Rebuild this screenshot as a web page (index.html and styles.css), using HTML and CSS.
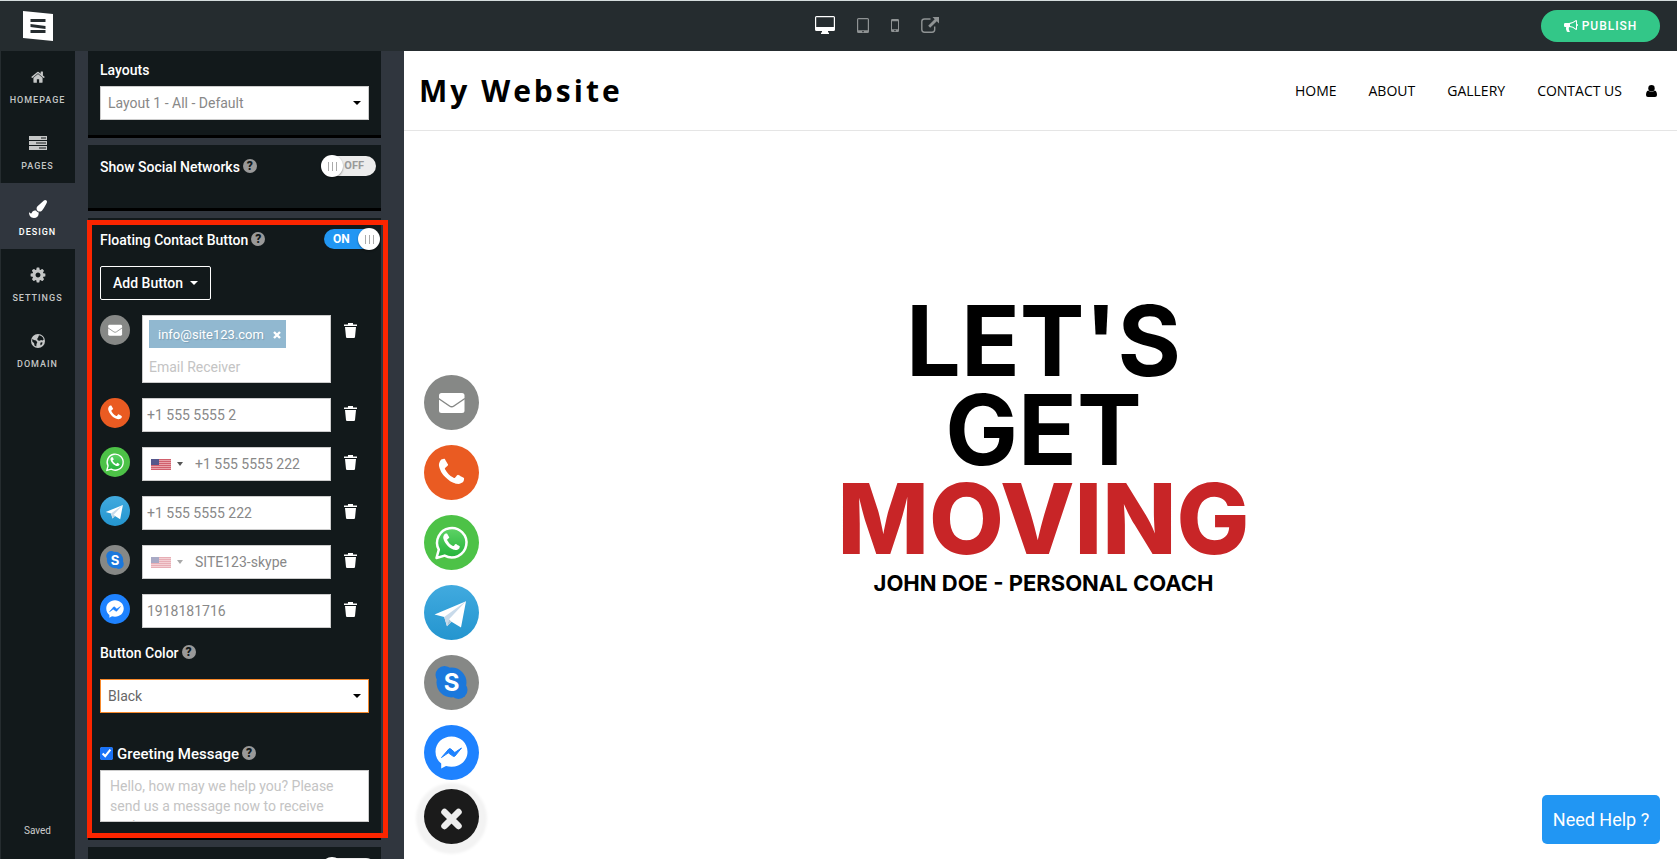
FILE: index.html
```html
<!DOCTYPE html>
<html lang="en">
    <head>
        <meta charset="utf-8">
        <title>Website Editor</title>
        <link rel="stylesheet" href="styles.css">
    </head>
    <body>
        <!-- shared icons -->
        <svg class="sprite" aria-hidden="true">
            <linearGradient id="tgblue" x1="0" y1="0" x2="0" y2="1"><stop offset="0" stop-color="#41aadf"/><stop offset="1" stop-color="#2495cf"/></linearGradient>
            <linearGradient id="wagreen" x1="0" y1="0" x2="0" y2="1"><stop offset="0" stop-color="#5fd366"/><stop offset="1" stop-color="#23b33a"/></linearGradient>
            <symbol id="c-mail" viewBox="0 0 55 55">
                <circle cx="27.500" cy="27.500" r="27.500" fill="#868886"/>
                <rect x="15" y="18" width="25.500" height="20" rx="2.500" fill="#fff"/>
                <path d="M14.500 23.500l11 7.500q2.200 1.500 4.400 0l11-7.500" fill="none" stroke="#868886" stroke-width="1.500"/>
            </symbol>
            <symbol id="c-phone" viewBox="0 0 55 55">
                <circle cx="27.500" cy="27.500" r="27.500" fill="#ea5b22"/>
                <svg x="11.500" y="11.500" width="32" height="32" viewBox="0 0 1792 1792"><use href="#phone" fill="#fff"/></svg>
            </symbol>
            <symbol id="c-whatsapp" viewBox="0 0 55 55">
                <circle cx="27.500" cy="27.500" r="27.500" fill="#4dc247"/>
                <path d="M12.500 43l2.300-8.300a14.700 14.700 0 1 1 5.800 5.900z" fill="url(#wagreen)" stroke="#fff" stroke-width="2.500" stroke-linejoin="round"/>
                <svg x="17" y="17" width="21" height="21" viewBox="0 0 1792 1792"><use href="#phone" fill="#fff"/></svg>
            </symbol>
            <symbol id="c-telegram" viewBox="0 0 55 55">
                <circle cx="27.500" cy="27.500" r="27.500" fill="url(#tgblue)"/>
                <path d="M10.500 29.500L42 16.300l-5 26.200-9.500-5.800-4.500 4.500-2.800-9.200z" fill="#fff"/>
                <path d="M20.200 32L42 16.300 25 34.300l-2 6.900z" fill="#c8daea"/>
                <path d="M23 41.200l2-6.900 2.500 2.400z" fill="#a9c6d8"/>
            </symbol>
            <symbol id="c-skype" viewBox="0 0 55 55">
                <circle cx="27.500" cy="27.500" r="27.500" fill="#868886"/>
                <circle cx="27.500" cy="27.500" r="15" fill="#1b78dc"/>
                <circle cx="20.500" cy="20" r="9" fill="#1b78dc"/>
                <circle cx="34.500" cy="35" r="9" fill="#1b78dc"/>
                <text x="27.500" y="36" text-anchor="middle" font-family="Inter, sans-serif" font-weight="700" font-size="24" fill="#fff">S</text>
            </symbol>
            <symbol id="c-messenger" viewBox="0 0 55 55">
                <circle cx="27.500" cy="27.500" r="27.500" fill="#1e82ff"/>
                <path d="M27.500 11.500c-9 0-16 6.600-16 15.200 0 5 2.200 9 5.700 11.800v5l4.800-2.500c1.700.5 3.600.8 5.500.8 9 0 16-6.500 16-15.100s-7-15.200-16-15.200z" fill="#fff"/>
                <path d="M17.500 32.500l7.300-8.500q1-.8 2 0l4 3.500 6.700-4.500-6.500 8q-1 .9-2.200 0l-4.500-3.200z" fill="#1e82ff" stroke="#1e82ff" stroke-linejoin="round"/>
            </symbol>
            <symbol id="phone" viewBox="0 0 1792 1792">
                <path d="M1600 1240q0 27-10 70.500t-21 68.500q-21 50-122 106-94 51-186 51-27 0-53-3.500t-57.500-12.500-47-14.500-55.500-20.500-49-18q-98-35-175-83-127-79-264-216t-216-264q-48-77-83-175-3-9-18-49t-20.500-55.500-14.500-47-12.500-57.500-3.500-53q0-92 51-186 56-101 106-122 25-11 68.500-21t70.500-10q14 0 21 3 18 6 53 76 11 19 30 54t35 63.500 31 53.500q3 4 17.500 25t21.500 35.500 7 28.500q0 20-28.500 50t-62 55-62 53-28.500 46q0 9 5 22.500t8.500 20.500 14 24 11.500 19q76 137 174 235t235 174q2 1 19 11.500t24 14 20.500 8.500 22.500 5q18 0 46-28.500t53-62 55-62 50-28.500q14 0 28.500 7t35.500 21.500 25 17.500q25 15 53.500 31t63.500 35 54 30q70 35 76 53 3 7 3 21z"/>
            </symbol>
            <symbol id="trash" viewBox="0 0 13 15">
                <path d="M0 1.500h4V0h5v1.500h4V3H0zM1 4h11l-1 10q-.1 1-1 1H3q-.9 0-1-1z"/>
            </symbol>
            <symbol id="flag" viewBox="0 0 20 11">
                <rect width="20" height="11" fill="#e9a3aa"/>
                <path d="M0 .5h20M0 2.500h20M0 4.500h20M0 6.500h20M0 8.500h20M0 10.500h20" stroke="#d0606d"/>
                <rect width="8" height="6" fill="#55588c"/>
            </symbol>
        </svg>

        <header id="TopBar">
            <a id="Logo" href="#" aria-label="Dashboard">
                <svg width="30" height="30" viewBox="0 0 30 30">
                    <path d="M0 0l30 3v27L0 27z" fill="#fff"/>
                    <path d="M7.500 8h15v3h-15zM7.500 13l15 2v3l-15-2zM7.500 19h15v3h-15z" fill="#252c2f"/>
                </svg>
            </a>
            <div id="Devices">
                <button class="device active" aria-label="Desktop">
                    <svg width="20" height="18" viewBox="0 0 20 18"><path fill-rule="evenodd" d="M1.500 0h17Q20 0 20 1.500v12q0 1.500-1.500 1.500H13v1.500h1V18H6v-1.500h1V15H1.500Q0 15 0 13.500v-12Q0 0 1.500 0zM1.200 1.200v9.800h17.600V1.200z"/></svg>
                </button>
                <button class="device" aria-label="Tablet">
                    <svg width="12" height="15" viewBox="0 0 12 15"><path fill-rule="evenodd" d="M1.500 0h9Q12 0 12 1.500v12q0 1.500-1.500 1.500h-9Q0 15 0 13.500v-12Q0 0 1.500 0zM1.200 1.200v11h9.600v-11zM5.300 13h1.400v1.200H5.300z"/></svg>
                </button>
                <button class="device" aria-label="Mobile">
                    <svg width="8" height="13" viewBox="0 0 8 13"><path fill-rule="evenodd" d="M1.200 0h5.600Q8 0 8 1.200v10.600Q8 13 6.800 13H1.200Q0 13 0 11.800V1.200Q0 0 1.200 0zM1 2.200v8h6v-8zM3.300 11h1.400v1.200H3.300z"/></svg>
                </button>
                <button class="device" aria-label="Open preview">
                    <svg width="18" height="16" viewBox="0 0 18 16"><path d="M9.500 2H3.500Q.8 2 .8 4.500v8q0 2.700 2.700 2.700h7.500q2.700 0 2.700-2.700V9.500" fill="none" stroke="#8f9394" stroke-width="1.400"/><path d="M11.500 0H18v6.500l-2.200-2.200-6.600 6.500-2-2 6.500-6.600z"/></svg>
                </button>
            </div>
            <button id="Publish">
                <svg width="14" height="14" viewBox="0 0 1792 1792"><path fill="#fff" d="M1664 640q53 0 90.500 37.500t37.500 90.500-37.500 90.500-90.500 37.500v384q0 52-38 90t-90 38q-417-347-812-380-58 19-91 66t-31 100.500 40 92.500q-20 33-23 65.500t6 58 33.500 55 48 50 61.500 50.500q-29 58-111.500 83t-168.500 11.500-132-55.500q-7-23-29.500-87.500t-32-94.500-23-89-15-101 3.500-98.500 22-110.500h-122q-66 0-113-47t-47-113v-192q0-66 47-113t113-47h480q435 0 896-384 52 0 90 38t38 90v384zm-128 604v-954q-394 302-768 343v270q377 42 768 341z"/></svg>
                PUBLISH
            </button>
        </header>

        <div id="Main">
            <nav id="SideNav">
                <a class="NavItem" href="#">
                    <svg width="16" height="16" viewBox="0 0 1792 1792"><path d="M1408 992v480q0 26-19 45t-45 19h-320v-384h-256v384h-320q-26 0-45-19t-19-45v-480q0-1 .5-3t.5-3l511-424 511 424q1 2 1 6zm223-69l-62 74q-8 9-21 11h-3q-13 0-21-7l-628-524-628 524q-12 8-24 7-13-2-21-11l-62-74q-8-10-7-23.500t11-21.500l655-546q32-26 76-26t76 26l222 186v-195q0-14 9-23t23-9h192q14 0 23 9t9 23v408l180 150q10 8 11 21.500t-7 23.500z"/></svg>
                    <span>HOMEPAGE</span>
                </a>
                <a class="NavItem" href="#">
                    <svg width="18" height="14" viewBox="0 0 18 14"><path fill-rule="evenodd" d="M0 0h18v4H0zM12 1.500v1h5v-1zM0 5h18v4H0zM7 6.500v1h10v-1zM0 10h18v4H0zM10 11.500v1h7v-1z"/></svg>
                    <span>PAGES</span>
                </a>
                <a class="NavItem active" href="#">
                    <svg width="18" height="18" viewBox="0 0 1792 1792"><path d="M1615 0q70 0 122.500 46.500t52.500 116.500q0 63-45 151-332 629-465 752-97 91-218 91-126 0-216.500-92.500t-90.500-219.500q0-128 92-212l638-579q59-54 130-54zm-909 1034q39 76 106.500 130t150.500 76l1 71q4 213-129.500 347t-348.500 134q-123 0-218-46.500t-152.500-127.500-86.500-183-29-220q7 5 41 30t62 44.500 59 36.500 46 17q41 0 55-37 25-66 57.500-112.500t69.500-76 88-47.500 103-25.500 125-10.500z"/></svg>
                    <span>DESIGN</span>
                </a>
                <a class="NavItem" href="#">
                    <svg width="16" height="16" viewBox="64 64 1664 1664"><path d="M1152 896q0-106-75-181t-181-75-181 75-75 181 75 181 181 75 181-75 75-181zm512-109v222q0 12-8 23t-20 13l-185 28q-19 54-39 91 35 50 107 138 10 12 10 25t-9 23q-27 37-99 108t-94 71q-12 0-26-9l-138-108q-44 23-91 38-16 136-29 186-7 28-36 28h-222q-14 0-24.500-8.500t-11.500-21.500l-28-184q-49-16-90-37l-141 107q-10 9-25 9-14 0-25-11-126-114-165-168-7-10-7-23 0-12 8-23 15-21 51-66.500t54-70.500q-27-50-41-99l-183-27q-13-2-21-12.500t-8-23.500v-222q0-12 8-23t19-13l186-28q14-46 39-92-40-57-107-138-10-12-10-24 0-10 9-23 26-36 98.500-107.500t94.500-71.500q13 0 26 10l138 107q44-23 91-38 16-136 29-186 7-28 36-28h222q14 0 24.500 8.500t11.500 21.500l28 184q49 16 90 37l142-107q9-9 24-9 13 0 25 10 129 119 165 170 7 8 7 22 0 12-8 23-15 21-51 66.500t-54 70.500q26 50 41 98l183 28q13 2 21 12.500t8 23.500z"/></svg>
                    <span>SETTINGS</span>
                </a>
                <a class="NavItem" href="#">
                    <svg width="14" height="14" viewBox="0 0 14 14"><circle cx="7" cy="7" r="7"/><path fill="#12191b" d="M8 1.200l2.200.8 1.700 1.600.8 1.900-1.200.9-1.500-.5-1.200.9-1.800-.4-.9-1.500 1-1.300zM1.200 5l1.800 1 2 .6 1.300 1.600-.8 1.700-.2 2.700L3.500 11.600l-.4-2.300L1.300 7.500zM9.800 8.200l1.800.2-.5 1.700-1.300 1.300-.6-1.500z"/></svg>
                    <span>DOMAIN</span>
                </a>
                <p id="Saved">Saved</p>
            </nav>

            <section id="Panel">
                <div class="Card" id="LayoutCard">
                    <label class="FieldTitle" for="layout">Layouts</label>
                    <div class="SelectBox">
                        <select id="layout"><option>Layout 1 - All - Default</option></select>
                    </div>
                </div>

                <div class="Card" id="SocialCard">
                    <div class="CardHead">
                        <label for="social">Show Social Networks</label>
                        <button class="help" aria-label="Help">?</button>
                        <div class="Toggle off"><input type="checkbox" id="social"><span class="state">OFF</span><span class="knob"></span></div>
                    </div>
                </div>

                <div class="Card" id="ContactCard">
                    <div class="CardHead">
                        <label for="floating">Floating Contact Button</label>
                        <button class="help" aria-label="Help">?</button>
                        <div class="Toggle on"><input type="checkbox" id="floating" checked><span class="state">ON</span><span class="knob"></span></div>
                    </div>
                    <button id="AddButton">Add Button <span class="caret"></span></button>

                    <div class="Contact">
                        <svg class="badge"><use href="#c-mail"/></svg>
                        <div class="Field tall">
                            <span class="tag">info@site123.com <button aria-label="Remove"><svg width="8" height="8" viewBox="0 0 8 8"><path d="M1 1l6 6M7 1L1 7" stroke="#fff" stroke-width="2.400"/></svg></button></span>
                            <input type="email" placeholder="Email Receiver" aria-label="Email Receiver">
                        </div>
                        <button class="remove" aria-label="Delete"><svg><use href="#trash"/></svg></button>
                    </div>
                    <div class="Contact">
                        <svg class="badge"><use href="#c-phone"/></svg>
                        <div class="Field"><input type="text" value="+1 555 5555 2" aria-label="Phone"></div>
                        <button class="remove" aria-label="Delete"><svg><use href="#trash"/></svg></button>
                    </div>
                    <div class="Contact">
                        <svg class="badge"><use href="#c-whatsapp"/></svg>
                        <div class="Field">
                            <button class="country" aria-label="Country"><svg><use href="#flag"/></svg><span class="caret"></span></button>
                            <input type="text" value="+1 555 5555 222" aria-label="WhatsApp">
                        </div>
                        <button class="remove" aria-label="Delete"><svg><use href="#trash"/></svg></button>
                    </div>
                    <div class="Contact">
                        <svg class="badge"><use href="#c-telegram"/></svg>
                        <div class="Field"><input type="text" value="+1 555 5555 222" aria-label="Telegram"></div>
                        <button class="remove" aria-label="Delete"><svg><use href="#trash"/></svg></button>
                    </div>
                    <div class="Contact">
                        <svg class="badge"><use href="#c-skype"/></svg>
                        <div class="Field">
                            <button class="country faded" aria-label="Country"><svg><use href="#flag"/></svg><span class="caret"></span></button>
                            <input type="text" value="SITE123-skype" aria-label="Skype">
                        </div>
                        <button class="remove" aria-label="Delete"><svg><use href="#trash"/></svg></button>
                    </div>
                    <div class="Contact">
                        <svg class="badge"><use href="#c-messenger"/></svg>
                        <div class="Field"><input type="text" value="1918181716" aria-label="Messenger"></div>
                        <button class="remove" aria-label="Delete"><svg><use href="#trash"/></svg></button>
                    </div>

                    <div class="CardHead" id="ColorHead">
                        <label for="color">Button Color</label>
                        <button class="help" aria-label="Help">?</button>
                    </div>
                    <div class="SelectBox focused">
                        <select id="color"><option>Black</option></select>
                    </div>

                    <div class="CardHead" id="GreetingHead">
                        <input type="checkbox" id="greeting" checked>
                        <label for="greeting">Greeting Message</label>
                        <button class="help" aria-label="Help">?</button>
                    </div>
                    <textarea placeholder="Hello, how may we help you? Please send us a message now to receive assistance." aria-label="Greeting text"></textarea>
                    <div id="Highlight"></div>
                </div>

                <div class="Card">
                    <div class="CardHead">
                        <div class="Toggle off"><input type="checkbox" aria-label="Next option"><span class="knob"></span></div>
                    </div>
                </div>
            </section>

            <main id="Preview">
                <header id="SiteHeader">
                    <h1>My Website</h1>
                    <nav>
                        <a href="#">HOME</a>
                        <a href="#">ABOUT</a>
                        <a href="#">GALLERY</a>
                        <a href="#">CONTACT US</a>
                        <a href="#" id="User" aria-label="Account"><svg width="11" height="12" viewBox="0 0 11 12"><circle cx="5.500" cy="3.200" r="3.200"/><path d="M2.200 5.400Q0 6.200 0 10q0 2 2 2h7q2 0 2-2 0-3.800-2.200-4.600-3.300 2.600-6.600 0z"/></svg></a>
                    </nav>
                </header>
                <div id="Hero">
                    <h2>LET'S<br>GET<br><span>MOVING</span></h2>
                    <p>JOHN DOE - PERSONAL COACH</p>
                </div>
                <div id="FloatBar">
                    <a href="#" aria-label="Email"><svg><use href="#c-mail"/></svg></a>
                    <a href="#" aria-label="Phone"><svg><use href="#c-phone"/></svg></a>
                    <a href="#" aria-label="WhatsApp"><svg><use href="#c-whatsapp"/></svg></a>
                    <a href="#" aria-label="Telegram"><svg><use href="#c-telegram"/></svg></a>
                    <a href="#" aria-label="Skype"><svg><use href="#c-skype"/></svg></a>
                    <a href="#" aria-label="Messenger"><svg><use href="#c-messenger"/></svg></a>
                    <button aria-label="Close"><svg viewBox="0 0 55 55"><path d="M20.500 23l14 14M34.500 23l-14 14" stroke="#eee" stroke-width="6.500" stroke-linecap="round"/></svg></button>
                </div>
                <button id="NeedHelp">Need Help ?</button>
            </main>
        </div>
    </body>
</html>
```
FILE: styles.css
```css
*{
    box-sizing: border-box;
}

body{
    margin: 0;
    height: 100vh;
    display: flex;
    flex-direction: column;
    overflow: hidden;
    font-family: Roboto, sans-serif;
    font-size: 14px;
    color: white;
}

button, input, select, textarea{
    font-family: inherit;
    font-size: inherit;
    margin: 0;
}

button{
    padding: 0;
    border: none;
    background: none;
    color: inherit;
    cursor: pointer;
}

a{
    color: inherit;
    text-decoration: none;
}

.sprite{
    position: absolute;
    width: 0;
    height: 0;
}

/* top bar */
#TopBar{
    position: relative;
    flex: none;
    height: 51px;
    display: flex;
    align-items: center;
    border-top: 1px solid #d5dddd;
    background-color: #252c2f;
}

#Logo{
    width: 75px;
    height: 30px;
    padding-left: 23px;
}

#Devices{
    flex: 1;
    display: flex;
    justify-content: center;
    align-items: center;
    gap: 22px;
    padding: 0 0 2px 2px;
}

.device{
    display: flex;
    fill: #8f9394;
}

.device.active{
    fill: white;
}

#Publish{
    position: absolute;
    right: 17px;
    top: 9px;
    width: 119px;
    height: 32px;
    display: flex;
    align-items: center;
    justify-content: center;
    gap: 4px;
    border-radius: 16px;
    background-color: #33c788;
    font-size: 12px;
    font-weight: 500;
    letter-spacing: 1px;
}

#Main{
    flex: 1;
    min-height: 0;
    display: flex;
}

/* left navigation */
#SideNav{
    flex: none;
    width: 75px;
    display: flex;
    flex-direction: column;
    background-color: #12191b;
    box-shadow: inset 1px 0 #252c2f;
}

.NavItem{
    height: 66px;
    display: flex;
    flex-direction: column;
    align-items: center;
    padding-top: 17px;
    gap: 8px;
    color: #c4c6c6;
    fill: #c4c6c6;
    font-size: 9px;
    line-height: 12px;
    font-weight: 500;
    letter-spacing: 1px;
}

.NavItem svg{
    height: 18px;
    flex: none;
}

.NavItem.active{
    background-color: #30363e;
    color: white;
    fill: white;
}

#Saved{
    margin: auto 0 20px;
    text-align: center;
    font-size: 10px;
    line-height: 16px;
    color: #ccc;
}

/* settings panel */
#Panel{
    flex: none;
    width: 329px;
    padding: 0 23px 0 13px;
    overflow: hidden;
    background-color: #30363e;
}

.Card{
    position: relative;
    margin-bottom: 7px;
    padding: 10px 12px;
    border-bottom: 3px solid black;
    background-color: #12191b;
}

#LayoutCard{
    padding-bottom: 15px;
}

#SocialCard{
    height: 66px;
}

#ContactCard{
    padding-bottom: 15px;
}

.FieldTitle{
    display: block;
    line-height: 18px;
    margin-bottom: 7px;
    font-weight: 500;
}

.CardHead{
    display: flex;
    align-items: center;
    height: 22px;
    font-weight: 500;
}

.CardHead label{
    padding-top: 2px;
}

.help{
    width: 14px;
    height: 14px;
    margin-left: 3px;
    border-radius: 50%;
    background-color: #999;
    color: #12191b;
    font-size: 12px;
    line-height: 14px;
    font-weight: 900;
}

.Toggle{
    position: relative;
    width: 52px;
    height: 20px;
    margin-left: auto;
    margin-right: -7px;
}

.Toggle input{
    appearance: none;
    display: block;
    width: 52px;
    height: 20px;
    border-radius: 10px;
    background-color: #ececec;
}

.Toggle.on input{
    background-color: #2196f3;
}

.state{
    position: absolute;
    top: 0;
    right: 12px;
    line-height: 20px;
    font-size: 11px;
    font-weight: 700;
    color: #999;
    pointer-events: none;
}

.on .state{
    right: auto;
    left: 9px;
    font-size: 12px;
    color: white;
}

.knob{
    position: absolute;
    top: -1px;
    left: -3px;
    width: 22px;
    height: 22px;
    border-radius: 50%;
    background: linear-gradient(90deg, #aaa 1px, transparent 1px 4px, #aaa 4px 5px, transparent 5px 8px, #aaa 8px) center / 9px 9px no-repeat white;
    box-shadow: 0 1px 2px rgba(0,0,0,0.4);
    pointer-events: none;
}

.on .knob{
    left: auto;
    right: -4px;
}

.caret{
    border: 4px solid transparent;
    border-top-color: currentColor;
    border-bottom: none;
}

.SelectBox{
    position: relative;
}

.SelectBox::after{
    content: "";
    position: absolute;
    right: 8px;
    top: 15px;
    border: 4px solid transparent;
    border-top-color: black;
    border-bottom: none;
    pointer-events: none;
}

.SelectBox select{
    appearance: none;
    display: block;
    width: 100%;
    height: 34px;
    padding: 0 7px;
    border: 1px solid #ccc;
    border-radius: 0;
    background-color: white;
    color: #888;
}

.SelectBox.focused select{
    border-color: #f7892b;
    color: #666;
}

#AddButton{
    display: flex;
    align-items: center;
    gap: 7px;
    height: 34px;
    margin: 16px 0 15px;
    padding: 0 12px;
    border: 1px solid white;
    border-radius: 2px;
    font-weight: 500;
}

/* one row for each contact channel */
.Contact{
    display: flex;
    align-items: flex-start;
    margin-bottom: 15px;
}

.badge{
    width: 30px;
    height: 30px;
    margin-right: 12px;
}

.Field{
    flex: none;
    width: 189px;
    height: 34px;
    display: flex;
    align-items: center;
    border: 1px solid #ccc;
    background-color: white;
    color: #888;
}

.Field input{
    flex: 1;
    min-width: 0;
    height: 32px;
    padding: 0 4px;
    border: none;
    background: none;
    color: #888;
}

.Field.tall{
    height: 68px;
    flex-direction: column;
    align-items: flex-start;
    padding: 4px 6px 0;
}

.tall input{
    flex: none;
    width: 100%;
    height: 36px;
    padding: 2px 0 0;
}

.tag{
    display: flex;
    align-items: center;
    flex: none;
    gap: 9px;
    height: 28px;
    padding: 0 5px 0 9px;
    background-color: #91b8d0;
    color: white;
    font-size: 13px;
    text-shadow: 1px 1px 1px rgba(0,0,0,0.15);
}

::placeholder{
    color: #c4c4c4;
}

.country{
    display: flex;
    align-items: center;
    gap: 6px;
    padding: 0 8px;
}

.country svg{
    width: 20px;
    height: 11px;
}

.country .caret{
    border-width: 4px 3px 0;
    color: #555;
}

.country.faded{
    opacity: 0.5;
}

.remove{
    margin: 8px 0 0 13px;
    fill: white;
}

.remove svg{
    display: block;
    width: 13px;
    height: 15px;
}

#ColorHead{
    margin-top: -2px;
    margin-bottom: 16px;
}

#GreetingHead{
    margin-top: 29px;
    margin-bottom: 6px;
    font-size: 15px;
}

#greeting{
    width: 13px;
    height: 13px;
    margin-right: 4px;
    accent-color: #1a73f8;
}

textarea{
    display: block;
    width: 100%;
    height: 52px;
    padding: 5px 9px 0;
    border: 1px solid #ccc;
    line-height: 20px;
    resize: none;
    overflow: hidden;
}

/* red frame over the contact settings */
#Highlight{
    position: absolute;
    top: 2px;
    right: -7px;
    bottom: -1px;
    left: -1px;
    border: 5px solid #fb2500;
    pointer-events: none;
}

/* website preview */
#Preview{
    position: relative;
    flex: 1;
    background-color: white;
    color: black;
    font-family: "Open Sans", sans-serif;
}

#SiteHeader{
    height: 80px;
    display: flex;
    align-items: center;
    justify-content: space-between;
    padding: 0 20px 0 15px;
    border-bottom: 1px solid #e5e5e5;
}

#SiteHeader h1{
    margin: 0;
    font-size: 30px;
    letter-spacing: 3px;
}

#SiteHeader nav{
    display: flex;
    align-items: center;
    gap: 32px;
}

#User{
    display: flex;
    margin-left: -8px;
}

#Hero{
    padding: 165px 0 0 6px;
    text-align: center;
    font-family: Inter, sans-serif;
    font-weight: 700;
}

#Hero h2{
    margin: 0;
    font-size: 97px;
    line-height: 89px;
}

#Hero span{
    color: #c82527;
    font-weight: 800;
}

#Hero p{
    margin: 7px 0 0;
    font-size: 22px;
    line-height: 26px;
}

#FloatBar{
    position: absolute;
    left: 20px;
    bottom: 15px;
    display: flex;
    flex-direction: column;
    gap: 15px;
}

#FloatBar svg{
    display: block;
    width: 55px;
    height: 55px;
}

#FloatBar button{
    margin-top: -6px;
    border-radius: 50%;
    background-color: #1b1b1b;
    box-shadow: 0 2px 3px 8px #f3f3f3;
}

#NeedHelp{
    position: absolute;
    right: 17px;
    bottom: 15px;
    width: 118px;
    height: 49px;
    border-radius: 5px;
    background-color: #2196f3;
    color: white;
    font-family: Roboto, sans-serif;
    font-size: 18px;
}
```
